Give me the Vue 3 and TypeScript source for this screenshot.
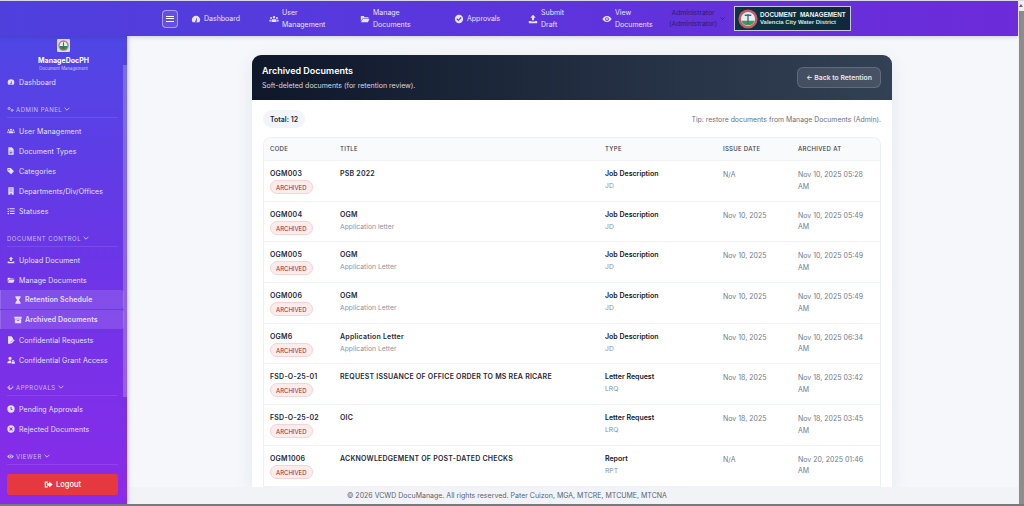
<script setup lang="ts">
interface NavLink { label: string; icon: string; sub?: boolean }
interface NavGroup { title?: string; icon?: string; links: NavLink[] }
interface TopLink { lines: string[]; icon: string; width: number }
interface DocRow { code: string; title: string; note?: string; type: string; abbr: string; issued: string; archived: string }

const icons: Record<string, string> = {
  gauge: 'M12 4a10 10 0 0 0-10 10c0 2.200.7 4.200 1.900 5.800.2.1.4.2.6.2h15c.2 0 .4-.1.6-.2A10 10 0 0 0 22 14 10 10 0 0 0 12 4zm1.600 12.200a2 2 0 1 1-2.300-.9l1.700-6h1l-.2 6.200c.3.2.6.4.8.7z',
  users: 'M12 5a3 3 0 1 1 0 6 3 3 0 0 1 0-6zM5 7a2.400 2.400 0 1 1 0 4.800A2.400 2.400 0 0 1 5 7zm14 0a2.400 2.400 0 1 1 0 4.800A2.400 2.400 0 0 1 19 7zM8 12.500h8a2 2 0 0 1 2 2V19H6v-4.500a2 2 0 0 1 2-2zM1 13.500h3.500V18H1zM19.500 13.500H23V18h-3.500z',
  folder: 'M2 5h7l2 2.500h9V10H6.500L2 17zM7 11.500h16L19 20H2z',
  check: 'M12 2a10 10 0 1 0 0 20 10 10 0 0 0 0-20zm-1.500 15L5.800 12.300l2-2 2.700 2.700 5.700-5.700 2 2z',
  upload: 'M12 2l6.500 7H14.500v6h-5V9H5.500zM2 16.500h5.500V18h9v-1.500H22V22H2z',
  eye: 'M12 5C6.500 5 2.500 9 1 12c1.500 3 5.500 7 11 7s9.500-4 11-7c-1.500-3-5.500-7-11-7zm0 11.500a4.500 4.500 0 1 1 0-9 4.500 4.500 0 0 1 0 9zm0-2.200a2.300 2.300 0 1 0 0-4.600 2.300 2.300 0 0 0 0 4.600z',
  gears: 'M9 3l1 2.500 2.500 1v4l-2.500 1L9 14H5.500l-1-2.500L2 10.500v-4l2.500-1 1-2.500zM7.200 6.500a2 2 0 1 0 0 4 2 2 0 0 0 0-4zM19 10l1 2 2.500 1v3.500l-2.500 1-1 2h-3l-1-2-2-1V13l2-1 1-2zm-1.500 3a1.700 1.700 0 1 0 0 3.400 1.700 1.700 0 0 0 0-3.400z',
  file: 'M4 1h10l6 6v16H4zM7.500 11v2h9v-2zm0 4v2h9v-2zm0 4v1.500h6V19z',
  tags: 'M1 3h10l10 10-9 9L1 12zm5 3a2 2 0 1 0 0 4 2 2 0 0 0 0-4z',
  building: 'M4 1h16v22h-6v-4h-4v4H4zM8 4.500v3h3v-3zm5 0v3h3v-3zM8 10.500v3h3v-3zm5 0v3h3v-3z',
  list: 'M9 4h14v3H9zm0 7h14v3H9zm0 7h14v3H9zM2 4l2 1.500L6.500 3 8 4.500 4 8.500 1 6zM2 11l2 1.500L6.500 10 8 11.500l-4 4-3-2.500zM2 18h4v4H2z',
  hourglass: 'M4 1h16v3.500h-1.500c0 4-2.500 6-4 7.500 1.500 1.500 4 3.500 4 7.500H20V23H4v-3.500h1.500c0-4 2.500-6 4-7.500-1.500-1.500-4-3.500-4-7.500H4z',
  box: 'M1 2h22v6H1zM2.500 9.500h19V22h-19zM8.500 12v2.500h7V12z',
  signature: 'M3 1h10l5 5v5l-6.500 6.500L10 23H3zM20 10l3 3-8.500 8.500-4 1 1-4z',
  userLock: 'M9 2a5 5 0 1 1 0 10 5 5 0 0 1 0-10zM1 21c0-4.500 3.500-7.500 8-7.500 1.300 0 2.500.3 3.500.7V22H2a1 1 0 0 1-1-1zM18.500 12a3.500 3.500 0 0 1 3.500 3.500V17h1.500v6H14v-6h1v-1.500a3.500 3.500 0 0 1 3.500-3.500zm0 2a1.500 1.500 0 0 0-1.500 1.500V17h3v-1.500a1.500 1.500 0 0 0-1.500-1.500z',
  stamp: 'M15 2l8 8-10 10-8-8 2.500-2.500 5.500 5.500 7-7-5.500-5.500zM9.500 3l2 2-7 7 7 7-2 2-9-9z',
  clock: 'M12 1a11 11 0 1 0 0 22 11 11 0 0 0 0-22zm1.400 5V11.300l3.700 2.500-1.500 2.200-5-3.400V6z',
  xmark: 'M12 1a11 11 0 1 0 0 22 11 11 0 0 0 0-22zm3.500 5.500l2 2L14 12l3.500 3.500-2 2L12 14l-3.500 3.500-2-2L10 12 6.500 8.500l2-2L12 10z',
  logout: 'M2 4h8v3.500H5.500v9H10V20H2zM14 4l9 8-9 8v-4.500H8v-7h6z',
}

const topLinks: TopLink[] = [
  { lines: ['Dashboard'], icon: 'gauge', width: 78 },
  { lines: ['User', 'Management'], icon: 'users', width: 91 },
  { lines: ['Manage', 'Documents'], icon: 'folder', width: 94 },
  { lines: ['Approvals'], icon: 'check', width: 74 },
  { lines: ['Submit', 'Draft'], icon: 'upload', width: 74 },
  { lines: ['View', 'Documents'], icon: 'eye', width: 66 },
]

const navGroups: NavGroup[] = [
  { links: [{ label: 'Dashboard', icon: 'gauge' }] },
  {
    title: 'ADMIN PANEL', icon: 'gears',
    links: [
      { label: 'User Management', icon: 'users' },
      { label: 'Document Types', icon: 'file' },
      { label: 'Categories', icon: 'tags' },
      { label: 'Departments/Div/Offices', icon: 'building' },
      { label: 'Statuses', icon: 'list' },
    ],
  },
  {
    title: 'DOCUMENT CONTROL',
    links: [
      { label: 'Upload Document', icon: 'upload' },
      { label: 'Manage Documents', icon: 'folder' },
      { label: 'Retention Schedule', icon: 'hourglass', sub: true },
      { label: 'Archived Documents', icon: 'box', sub: true },
      { label: 'Confidential Requests', icon: 'signature' },
      { label: 'Confidential Grant Access', icon: 'userLock' },
    ],
  },
  {
    title: 'APPROVALS', icon: 'stamp',
    links: [
      { label: 'Pending Approvals', icon: 'clock' },
      { label: 'Rejected Documents', icon: 'xmark' },
    ],
  },
  { title: 'VIEWER', icon: 'eye', links: [] },
]

const jd = { type: 'Job Description', abbr: 'JD' }
const lrq = { type: 'Letter Request', abbr: 'LRQ' }

const rows: DocRow[] = [
  { code: 'OGM003', title: 'PSB 2022', ...jd, issued: 'N/A', archived: 'Nov 10, 2025 05:28 AM' },
  { code: 'OGM004', title: 'OGM', note: 'Application letter', ...jd, issued: 'Nov 10, 2025', archived: 'Nov 10, 2025 05:49 AM' },
  { code: 'OGM005', title: 'OGM', note: 'Application Letter', ...jd, issued: 'Nov 10, 2025', archived: 'Nov 10, 2025 05:49 AM' },
  { code: 'OGM006', title: 'OGM', note: 'Application Letter', ...jd, issued: 'Nov 10, 2025', archived: 'Nov 10, 2025 05:49 AM' },
  { code: 'OGM6', title: 'Application Letter', note: 'Application Letter', ...jd, issued: 'Nov 10, 2025', archived: 'Nov 10, 2025 06:34 AM' },
  { code: 'FSD-O-25-01', title: 'REQUEST ISSUANCE OF OFFICE ORDER TO MS REA RICARE', ...lrq, issued: 'Nov 18, 2025', archived: 'Nov 18, 2025 03:42 AM' },
  { code: 'FSD-O-25-02', title: 'OIC', ...lrq, issued: 'Nov 18, 2025', archived: 'Nov 18, 2025 03:45 AM' },
  { code: 'OGM1006', title: 'ACKNOWLEDGEMENT OF POST-DATED CHECKS', type: 'Report', abbr: 'RPT', issued: 'N/A', archived: 'Nov 20, 2025 01:46 AM' },
]
</script>

<template>
  <div class="frame">
    <div class="window">
      <div class="viewport">
        <header class="topbar">
          <button class="burger" aria-label="Toggle menu"><span></span><span></span><span></span></button>
          <nav class="top-nav">
            <a v-for="link in topLinks" :key="link.icon" class="top-link" :style="{ width: link.width + 'px' }">
              <svg class="icon top-icon" viewBox="0 0 24 24"><path :d="icons[link.icon]" /></svg>
              <span class="top-text"><span v-for="line in link.lines" :key="line">{{ line }}</span></span>
            </a>
          </nav>
          <div class="account">
            <span class="account-name">Administrator<br />(Administrator)</span>
            <svg class="account-caret" viewBox="0 0 10 6"><path d="M1 1l4 4 4-4" /></svg>
          </div>
          <div class="banner">
            <svg class="seal" viewBox="0 0 24 24">
              <circle cx="12" cy="12" r="11.500" fill="#c65a6a" />
              <circle cx="12" cy="12" r="8.500" fill="#e8eef0" />
              <path d="M4 14h16a8.500 8.500 0 0 1-16 0z" fill="#3f9a57" />
              <path d="M11.200 6h1.600v12h-1.600zM8 6.500h8v2H8z" fill="#2f6f8a" />
            </svg>
            <div class="banner-text">
              <strong>DOCUMENT&nbsp; MANAGEMENT</strong>
              <strong>Valencia City Water District</strong>
            </div>
          </div>
        </header>

        <div class="body">
          <aside class="sidebar">
            <div class="brand">
              <svg class="brand-logo" viewBox="0 0 24 24">
                <rect width="24" height="24" rx="2" fill="#d8dee0" />
                <circle cx="12" cy="12" r="9.500" fill="#c9716f" />
                <circle cx="12" cy="12" r="7" fill="#e8eef0" />
                <path d="M5 13h14a7 7 0 0 1-14 0z" fill="#2f8a52" />
                <path d="M11 6h2v12h-2z" fill="#2f6f8a" />
              </svg>
              <div class="brand-name">ManageDocPH</div>
              <div class="brand-sub">Document Management</div>
            </div>

            <div class="nav-scroll">
              <section v-for="group in navGroups" :key="group.title ?? 'home'" class="group">
                <div v-if="group.title" class="group-title">
                  <svg v-if="group.icon" class="icon group-icon" viewBox="0 0 24 24"><path :d="icons[group.icon]" /></svg>
                  <span>{{ group.title }}</span>
                  <svg class="group-caret" viewBox="0 0 10 6"><path d="M1 1l4 4 4-4" /></svg>
                </div>
                <a v-for="link in group.links" :key="link.label" class="side-link" :class="{ sub: link.sub }">
                  <svg class="icon side-icon" viewBox="0 0 24 24"><path :d="icons[link.icon]" /></svg>
                  <span>{{ link.label }}</span>
                </a>
              </section>
            </div>

            <div class="logout-wrap">
              <button class="logout">
                <svg class="icon logout-icon" viewBox="0 0 24 24"><path :d="icons.logout" /></svg>
                Logout
              </button>
            </div>
            <div class="side-thumb"></div>
          </aside>

          <div class="content">
            <main class="main">
              <section class="card">
                <div class="card-head">
                  <div>
                    <h1>Archived Documents</h1>
                    <p>Soft-deleted documents (for retention review).</p>
                  </div>
                  <a class="back">← Back to Retention</a>
                </div>
                <div class="card-body">
                  <div class="summary">
                    <span class="total">Total: 12</span>
                    <span class="tip">Tip: restore documents from Manage Documents (Admin).</span>
                  </div>
                  <div class="table">
                    <div class="tr th">
                      <div>CODE</div><div>TITLE</div><div>TYPE</div><div>ISSUE DATE</div><div>ARCHIVED AT</div>
                    </div>
                    <div v-for="row in rows" :key="row.code" class="tr">
                      <div>
                        <div class="strong wide">{{ row.code }}</div>
                        <span class="badge">ARCHIVED</span>
                      </div>
                      <div>
                        <div class="strong wide">{{ row.title }}</div>
                        <div v-if="row.note" class="muted note">{{ row.note }}</div>
                      </div>
                      <div>
                        <div class="strong type">{{ row.type }}</div>
                        <div class="muted note">{{ row.abbr }}</div>
                      </div>
                      <div class="date">{{ row.issued }}</div>
                      <div class="date">{{ row.archived }}</div>
                    </div>
                  </div>
                </div>
              </section>
            </main>
            <footer class="footer">© 2026 VCWD DocuManage. All rights reserved. Pater Cuizon, MGA, MTCRE, MTCUME, MTCNA</footer>
          </div>
        </div>
      </div>
      <div class="page-scroll"><i class="arrow"></i><div class="page-thumb"></div></div>
    </div>
  </div>
</template>

<style scoped>
.frame {
  height: 506px;
  box-sizing: border-box;
  display: flex;
  flex-direction: column;
  border-top: 1px solid #d9d9e3;
  border-bottom: 2px solid #77797d;
  overflow: hidden;
  font-family: Inter, "Noto Sans", sans-serif;
  color: #111827;
}
.window { flex: 1; min-height: 0; display: flex; }
.viewport { flex: 1; min-width: 0; display: flex; flex-direction: column; }
.page-scroll { width: 6px; background: #f1f1f1; display: flex; flex-direction: column; align-items: center; padding-top: 3px; }
.arrow { width: 0; height: 0; border: 2.500px solid transparent; border-top: 0; border-bottom: 3px solid #666; }
.page-thumb { width: 5px; flex: 1; margin-top: 4px; background: #8d8d8d; }
.icon { fill: currentColor; flex-shrink: 0; }

.topbar {
  height: 35px;
  flex-shrink: 0;
  display: flex;
  align-items: center;
  padding-left: 162px;
  background: linear-gradient(90deg, #4f40dc, #5a36dc 45%, #6d2bd9);
  color: #e6e4fb;
  box-shadow: 0 1px 4px rgba(40, 30, 90, .2);
  position: relative;
  z-index: 2;
}
.burger {
  width: 16px;
  height: 18px;
  padding: 0;
  margin-right: 13px;
  display: flex;
  flex-direction: column;
  align-items: center;
  justify-content: center;
  gap: 1.500px;
  background: rgba(255, 255, 255, .1);
  border: 1px solid rgba(255, 255, 255, .45);
  border-radius: 4px;
}
.burger span { width: 8px; height: 1px; background: #fff; }
.top-nav { display: flex; align-items: center; }
.top-link { display: flex; align-items: center; gap: 3px; font-size: 7px; line-height: 11.500px; }
.top-icon { width: 10px; height: 10px; }
.top-text { display: flex; flex-direction: column; }
.account { display: flex; align-items: center; gap: 2px; color: #2b1b78; }
.account-name { width: 50px; font-size: 6.800px; line-height: 10.500px; text-align: center; white-space: nowrap; }
.account-caret { width: 5px; height: 3px; fill: none; stroke: #2b1b78; stroke-width: 1.500; }
.banner {
  margin-left: 9px;
  width: 117px;
  height: 25px;
  box-sizing: border-box;
  display: flex;
  align-items: center;
  gap: 2px;
  padding-left: 3px;
  background: linear-gradient(90deg, #0d3440, #10283a);
  border: 1.500px solid #c9c4df;
}
.seal { width: 20px; height: 20px; flex-shrink: 0; }
.banner-text { display: flex; flex-direction: column; gap: 1px; color: #e9f3f5; font-family: "Liberation Sans", sans-serif; line-height: 7px; }
.banner-text strong:first-child { font-size: 6.300px; white-space: nowrap; }
.banner-text strong:last-child { font-size: 5.900px; white-space: nowrap; color: #cfe8d8; }

.body { flex: 1; min-height: 0; display: flex; }
.sidebar {
  width: 127px;
  flex-shrink: 0;
  display: flex;
  flex-direction: column;
  position: relative;
  background: linear-gradient(180deg, #4f46e5, #6a36e6 45%, #8a2be9);
  color: #e4e0fb;
  box-shadow: 1px 0 4px rgba(60, 40, 120, .25);
  z-index: 1;
}
.brand { height: 29px; box-sizing: border-box; padding-top: 3px; text-align: center; }
.brand-logo { display: block; width: 13px; height: 13px; margin: 0 auto; }
.brand-name { font-size: 7px; font-weight: 700; color: #fff; line-height: 10px; margin-top: 4px; }
.brand-sub { font-size: 4.300px; line-height: 5px; color: #cfcaf5; }
.nav-scroll { flex: 1; min-height: 0; overflow: hidden; padding-top: 7px; }
.group + .group { margin-top: 7px; }
.group-title {
  height: 19px;
  margin: 0 9px 3px 7px;
  padding-top: 2px;
  box-sizing: border-box;
  display: flex;
  align-items: center;
  gap: 2px;
  font-size: 6px;
  letter-spacing: .5px;
  color: #c3bdf2;
  border-bottom: 1px solid rgba(255, 255, 255, .1);
}
.group-icon { width: 7px; height: 7px; }
.group-caret { width: 6px; height: 4px; fill: none; stroke: #d0cbf6; stroke-width: 1.500; }
.side-link {
  height: 20px;
  display: flex;
  align-items: center;
  gap: 4px;
  padding-left: 7px;
  font-size: 7px;
  letter-spacing: .1px;
  white-space: nowrap;
}
.side-icon { width: 8px; height: 8px; }
.side-link.sub {
  margin-right: 3px;
  padding-left: 13px;
  gap: 3px;
  font-weight: 600;
  background: rgba(255, 255, 255, .13);
  border-left: 1px solid rgba(255, 255, 255, .15);
  border-radius: 0 3px 3px 0;
  box-sizing: border-box;
  height: 19px;
  margin-bottom: 1px;
}
.logout-wrap { height: 31px; box-sizing: border-box; padding: 1px 9px 0 7px; background: #8a2be9; }
.logout {
  width: 100%;
  height: 21px;
  display: flex;
  align-items: center;
  justify-content: center;
  gap: 3px;
  border: 0;
  border-radius: 3px;
  background: #e6393f;
  color: #fff;
  font: 500 7.500px Inter, sans-serif;
}
.logout-icon { width: 9px; height: 9px; }
.side-thumb { position: absolute; right: 0; top: 29px; width: 4px; height: 332px; background: rgba(255, 255, 255, .22); }

.content { flex: 1; min-width: 0; display: flex; flex-direction: column; background: #f5f7fb; }
.main { flex: 1; min-height: 0; overflow: hidden; padding: 19px 126px 0 125px; }
.card { background: #fff; border-radius: 9px 9px 0 0; box-shadow: 0 4px 18px rgba(30, 41, 59, .08); }
.card-head {
  height: 45px;
  box-sizing: border-box;
  display: flex;
  align-items: center;
  justify-content: space-between;
  padding: 0 11px 0 10px;
  background: linear-gradient(90deg, #0f172a, #334155);
  border-radius: 9px 9px 0 0;
  color: #fff;
}
.card-head h1 { margin: 0; font-size: 9px; font-weight: 600; line-height: 14px; }
.card-head p { margin: 3px 0 0; font-size: 7px; line-height: 10px; color: #d5dbe4; }
.back {
  width: 84px;
  height: 21px;
  box-sizing: border-box;
  display: flex;
  align-items: center;
  justify-content: center;
  font-size: 6.800px;
  font-weight: 600;
  color: #e5e9f0;
  background: rgba(255, 255, 255, .1);
  border: 1px solid rgba(255, 255, 255, .15);
  border-radius: 6px;
}
.card-body { padding: 10px 11px 0; }
.summary { display: flex; align-items: center; justify-content: space-between; height: 18px; margin-bottom: 9px; }
.total { font-size: 7px; font-weight: 600; padding: 1px 7px 0; line-height: 17px; border-radius: 9px; background: #f1f5f9; color: #1f2937; }
.tip { font-size: 6.900px; color: #6b7280; }
.table { border: 1px solid #edf0f4; border-bottom: 0; border-radius: 8px 8px 0 0; }
.tr {
  display: grid;
  grid-template-columns: 70px 265px 118px 75px 1fr;
  height: 40.700px;
  box-sizing: border-box;
  padding: 8px 6px 0;
  font-size: 7px;
  border-bottom: 1px solid #f0f2f5;
}
.tr.th {
  height: 23px;
  padding-top: 0;
  padding-bottom: 1px;
  align-items: center;
  background: #f8fafc;
  border-radius: 8px 8px 0 0;
  font-size: 6px;
  font-weight: 500;
  letter-spacing: .3px;
  color: #374151;
}
.strong { font-weight: 600; line-height: 10px; color: #1f2937; }
.wide { letter-spacing: .22px; white-space: nowrap; }
.type { color: #111827; }
.muted { color: #8b93a1; }
.note { margin-top: 2px; line-height: 9px; font-size: 6.800px; }
.badge {
  display: inline-block;
  margin-top: 1px;
  padding: 0 5px;
  height: 14px;
  line-height: 13px;
  box-sizing: border-box;
  font-size: 6px;
  color: #9b1c2e;
  background: #fdecec;
  border: 1px solid #f8d2d4;
  border-radius: 7px;
}
.date { line-height: 11.500px; color: #727c8b; padding-right: 8px; }
.footer {
  height: 17px;
  flex-shrink: 0;
  box-sizing: border-box;
  padding-left: 220px;
  line-height: 17px;
  font-size: 7px;
  color: #5b6472;
  background: #f1f3f6;
  white-space: nowrap;
}
</style>
